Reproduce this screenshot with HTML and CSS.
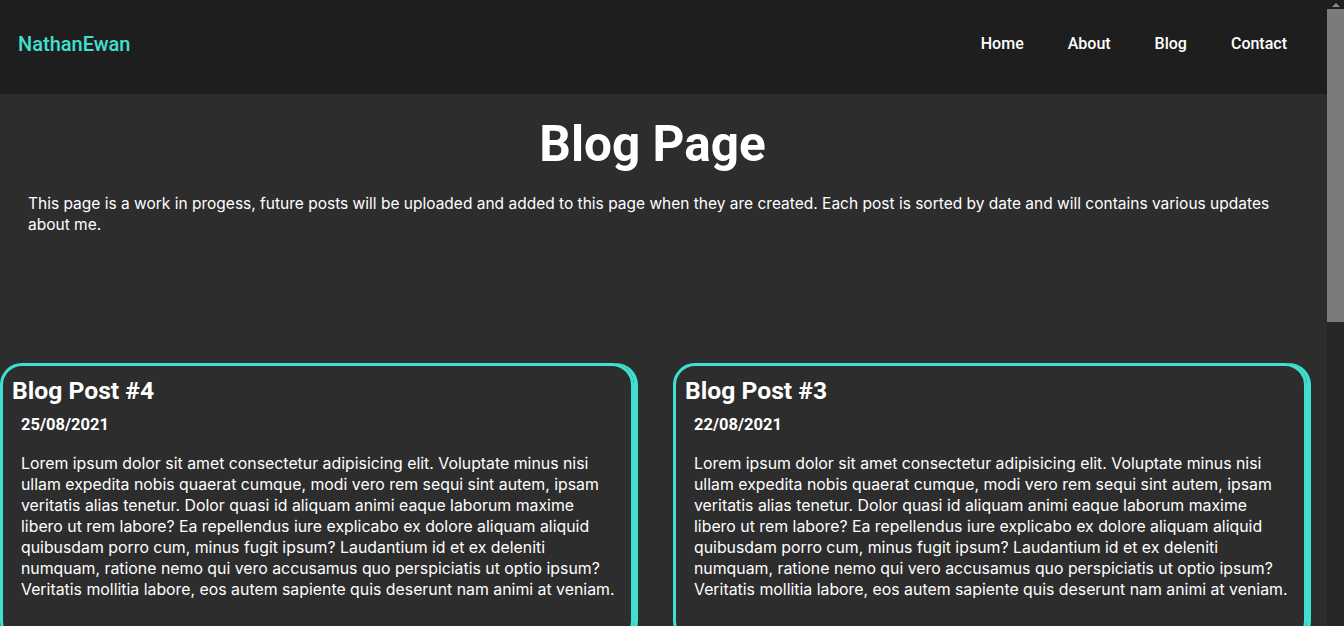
FILE: index.html
```html
<!DOCTYPE html>
<html lang="en">
<head>
<meta charset="utf-8">
<title>Blog - NathanEwan</title>
<link rel="stylesheet" href="styles.css">
</head>
<body>
<div class="page">
  <header class="site-header">
    <a class="logo" href="#">NathanEwan</a>
    <nav class="nav">
      <a href="#">Home</a>
      <a href="#">About</a>
      <a href="#">Blog</a>
      <a href="#">Contact</a>
    </nav>
  </header>
  <main class="main">
    <section class="intro">
      <h1 class="page-title">Blog Page</h1>
      <p class="intro-text">This page is a work in progess, future posts will be uploaded and added to this page when they are created. Each post is sorted by date and will contains various updates about me.</p>
    </section>
    <section class="posts">
      <article class="post">
        <h2 class="post-title">Blog Post #4</h2>
        <h3 class="post-date">25/08/2021</h3>
        <p class="post-body">Lorem ipsum dolor sit amet consectetur adipisicing elit. Voluptate minus nisi ullam expedita nobis quaerat cumque, modi vero rem sequi sint autem, ipsam veritatis alias tenetur. Dolor quasi id aliquam animi eaque laborum maxime libero ut rem labore? Ea repellendus iure explicabo ex dolore aliquam aliquid quibusdam porro cum, minus fugit ipsum? Laudantium id et ex deleniti numquam, ratione nemo qui vero accusamus quo perspiciatis ut optio ipsum? Veritatis mollitia labore, eos autem sapiente quis deserunt nam animi at veniam.</p>
      </article>
      <article class="post">
        <h2 class="post-title">Blog Post #3</h2>
        <h3 class="post-date">22/08/2021</h3>
        <p class="post-body">Lorem ipsum dolor sit amet consectetur adipisicing elit. Voluptate minus nisi ullam expedita nobis quaerat cumque, modi vero rem sequi sint autem, ipsam veritatis alias tenetur. Dolor quasi id aliquam animi eaque laborum maxime libero ut rem labore? Ea repellendus iure explicabo ex dolore aliquam aliquid quibusdam porro cum, minus fugit ipsum? Laudantium id et ex deleniti numquam, ratione nemo qui vero accusamus quo perspiciatis ut optio ipsum? Veritatis mollitia labore, eos autem sapiente quis deserunt nam animi at veniam.</p>
      </article>
      <article class="post">
        <h2 class="post-title">Blog Post #2</h2>
        <h3 class="post-date">18/08/2021</h3>
        <p class="post-body">Lorem ipsum dolor sit amet consectetur adipisicing elit. Voluptate minus nisi ullam expedita nobis quaerat cumque, modi vero rem sequi sint autem, ipsam veritatis alias tenetur. Dolor quasi id aliquam animi eaque laborum maxime libero ut rem labore?</p>
      </article>
      <article class="post">
        <h2 class="post-title">Blog Post #1</h2>
        <h3 class="post-date">15/08/2021</h3>
        <p class="post-body">Lorem ipsum dolor sit amet consectetur adipisicing elit. Voluptate minus nisi ullam expedita nobis quaerat cumque, modi vero rem sequi sint autem, ipsam veritatis alias tenetur.</p>
      </article>
    </section>
  </main>
</div>
<div class="scrollbar" aria-hidden="true">
  <div class="scrollbar-arrow"></div>
  <div class="scrollbar-thumb"></div>
</div>
</body>
</html>
```

FILE: styles.css
```css
* {
  box-sizing: border-box;
}

html, body {
  margin: 0;
  padding: 0;
}

body {
  background: #2d2d2d;
  color: #ffffff;
  font-family: "Inter", "Open Sans", sans-serif;
}

a {
  text-decoration: none;
}

.page {
  margin-right: 17px;
}

.site-header {
  height: 94px;
  background: #1e1e1e;
  display: flex;
  align-items: center;
  justify-content: space-between;
  padding: 0 40px 7px 18px;
}

.logo {
  color: #40e0d0;
  font-family: "Roboto", sans-serif;
  font-weight: 500;
  font-size: 20px;
}

.nav {
  display: flex;
  gap: 44px;
}

.nav a {
  color: #ffffff;
  font-family: "Roboto", sans-serif;
  font-weight: 500;
  font-size: 16px;
}

.intro {
  padding: 0 50px 0 28px;
}

.page-title {
  margin: 0;
  padding-top: 21px;
  text-align: center;
  font-family: "Roboto", sans-serif;
  font-weight: 700;
  font-size: 49.5px;
  line-height: 58px;
}

.intro-text {
  margin: 20px 0 0;
  font-size: 15.5px;
  line-height: 21px;
}

.posts {
  display: grid;
  grid-template-columns: 1fr 1fr;
  column-gap: 39px;
  row-gap: 40px;
  padding: 128px 20px 40px 0;
}

.post {
  border: 3px solid #40e0d0;
  border-radius: 22px;
  box-shadow: 4px 0 0 #40e0d0;
  padding: 10px 9px 40px;
}

.post-title {
  margin: 0;
  font-family: "Roboto", sans-serif;
  font-weight: 700;
  font-size: 24.7px;
  line-height: 30px;
}

.post-date {
  margin: 9px 0 0;
  padding: 0 9px;
  font-family: "Roboto", sans-serif;
  font-weight: 700;
  font-size: 16.5px;
  line-height: 20px;
}

.post-body {
  margin: 18px 0 0;
  padding: 0 5px 0 9px;
  font-size: 15.85px;
  line-height: 21px;
}

.scrollbar {
  position: fixed;
  top: 0;
  right: 0;
  width: 17px;
  height: 100vh;
  background: #262626;
}

.scrollbar-arrow {
  height: 9px;
  background: #1e1e1e;
  display: flex;
  justify-content: center;
  align-items: center;
}

.scrollbar-arrow::before {
  content: "";
  width: 0;
  height: 0;
  border-left: 4px solid transparent;
  border-right: 4px solid transparent;
  border-bottom: 4px solid #8a8a8a;
}

.scrollbar-thumb {
  height: 313px;
  background: #7b7b7b;
}
```
